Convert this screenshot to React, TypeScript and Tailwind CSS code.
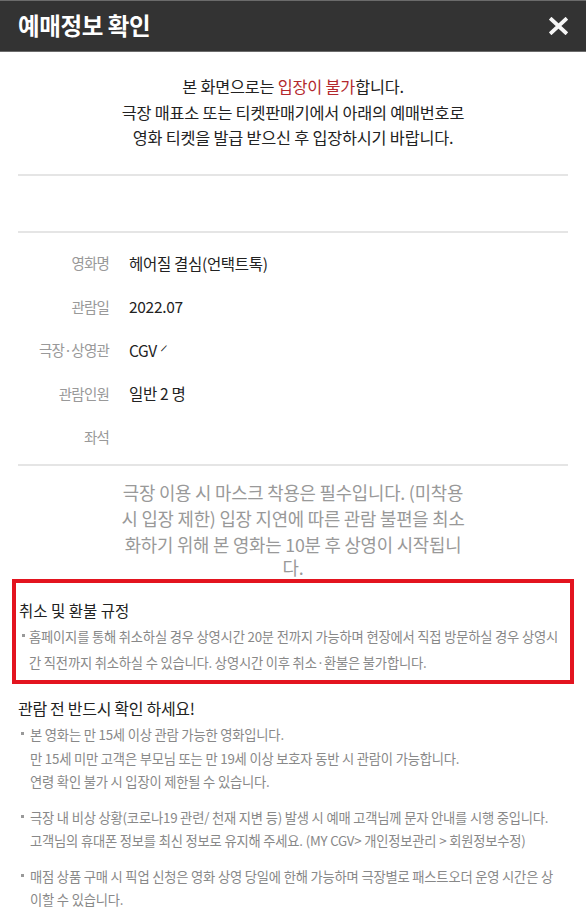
import React from 'react';

const font = { fontFamily: '"Noto Sans CJK KR", "Noto Sans", sans-serif' };

const infoRows = [
  { label: '영화명', value: '헤어질 결심(언택트톡)' },
  { label: '관람일', value: '2022.07' },
  { label: '극장·상영관', value: 'CGV ⸍' },
  { label: '관람인원', value: '일반 2 명' },
  { label: '좌석', value: '' },
];

const notices = [
  [
    '본 영화는 만 15세 이상 관람 가능한 영화입니다.',
    '만 15세 미만 고객은 부모님 또는 만 19세 이상 보호자 동반 시 관람이 가능합니다.',
    '연령 확인 불가 시 입장이 제한될 수 있습니다.',
  ],
  [
    '극장 내 비상 상황(코로나19 관련/ 천재 지변 등) 발생 시 예매 고객님께 문자 안내를 시행 중입니다.',
    '고객님의 휴대폰 정보를 최신 정보로 유지해 주세요. (MY CGV> 개인정보관리 > 회원정보수정)',
  ],
  [
    '매점 상품 구매 시 픽업 신청은 영화 상영 당일에 한해 가능하며 극장별로 패스트오더 운영 시간은 상',
    '이할 수 있습니다.',
  ],
];

function Bullet({ lines }: { lines: string[] }) {
  return (
    <div className="relative pl-[12px] text-[13.3px] leading-[23.5px] text-[#888] tracking-[-0.2px]">
      <span className="absolute left-[3px] top-[9px] w-[3px] h-[3px] bg-[#999]" />
      {lines.map((l, i) => (
        <div key={i} className="whitespace-nowrap">{l}</div>
      ))}
    </div>
  );
}

export default function App() {
  return (
    <div className="w-[586px] h-[920px] bg-white overflow-hidden" style={font}>
      {/* header */}
      <div className="h-[52px] bg-[#333] border-t border-b border-[#6b6b6b] flex items-center justify-between pl-[18px] pr-[18px]">
        <h1 className="text-white text-[23.5px] font-bold tracking-[-0.4px]">예매정보 확인</h1>
        <svg width="19" height="18" viewBox="0 0 19 18">
          <path d="M2.5 2.5 L16.5 15.5 M16.5 2.5 L2.5 15.5" stroke="#f5f5f5" strokeWidth="3.8" strokeLinecap="square" />
        </svg>
      </div>

      <div className="px-[18px]">
        {/* intro */}
        <div className="pt-[22px] pb-[23px] text-center text-[16.3px] leading-[25.5px] text-[#222] tracking-[-0.2px] border-b-2 border-[#e5e5e5]">
          <p>본 화면으로는 <span className="text-[#b3282d]">입장이 불가</span>합니다.</p>
          <p>극장 매표소 또는 티켓판매기에서 아래의 예매번호로</p>
          <p>영화 티켓을 발급 받으신 후 입장하시기 바랍니다.</p>
        </div>

        <div className="h-[57px] border-b-2 border-[#e5e5e5]" />

        {/* info */}
        <div className="pt-[9px] pb-[5px] border-b-2 border-[#e5e5e5]">
          {infoRows.map((r) => (
            <div key={r.label} className="flex h-[43.5px] items-center">
              <div className="w-[91px] text-right text-[14.5px] text-[#999] tracking-[-0.8px] whitespace-nowrap">
                {r.label}
              </div>
              <div className="ml-[20px] text-[15.5px] text-[#222] tracking-[-0.3px]">{r.value}</div>
            </div>
          ))}
        </div>

        {/* mask notice */}
        <div className="pt-[13px] pb-[2px] text-center text-[17.8px] leading-[26px] text-[#999] tracking-[-0.2px]">
          <p>극장 이용 시 마스크 착용은 필수입니다. (미착용</p>
          <p>시 입장 제한) 입장 지연에 따른 관람 불편을 최소</p>
          <p>화하기 위해 본 영화는 10분 후 상영이 시작됩니</p>
          <p className="leading-[20px]">다.</p>
        </div>

        {/* refund */}
        <div className="-mx-[6px] border-4 border-[#e3141f] pl-[3px] pt-[16px] pb-[4px]">
          <h2 className="text-[15.5px] leading-[22px] text-[#222]">취소 및 환불 규정</h2>
          <div className="mt-[3px] relative pl-[10px] text-[13.3px] leading-[26px] text-[#888] tracking-[-0.2px]">
            <span className="absolute left-[3px] top-[10px] w-[3px] h-[3px] bg-[#999]" />
            <div className="whitespace-nowrap">홈페이지를 통해 취소하실 경우 상영시간 20분 전까지 가능하며 현장에서 직접 방문하실 경우 상영시</div>
            <div className="whitespace-nowrap">간 직전까지 취소하실 수 있습니다. 상영시간 이후 취소·환불은 불가합니다.</div>
          </div>
        </div>

        {/* check */}
        <h2 className="mt-[12px] text-[16px] leading-[24px] text-[#222] tracking-[-0.3px]">관람 전 반드시 확인 하세요!</h2>
        <div className="mt-[3px] flex flex-col gap-[12px]">
          {notices.map((n, i) => (
            <Bullet key={i} lines={n} />
          ))}
        </div>
      </div>
    </div>
  );
}
